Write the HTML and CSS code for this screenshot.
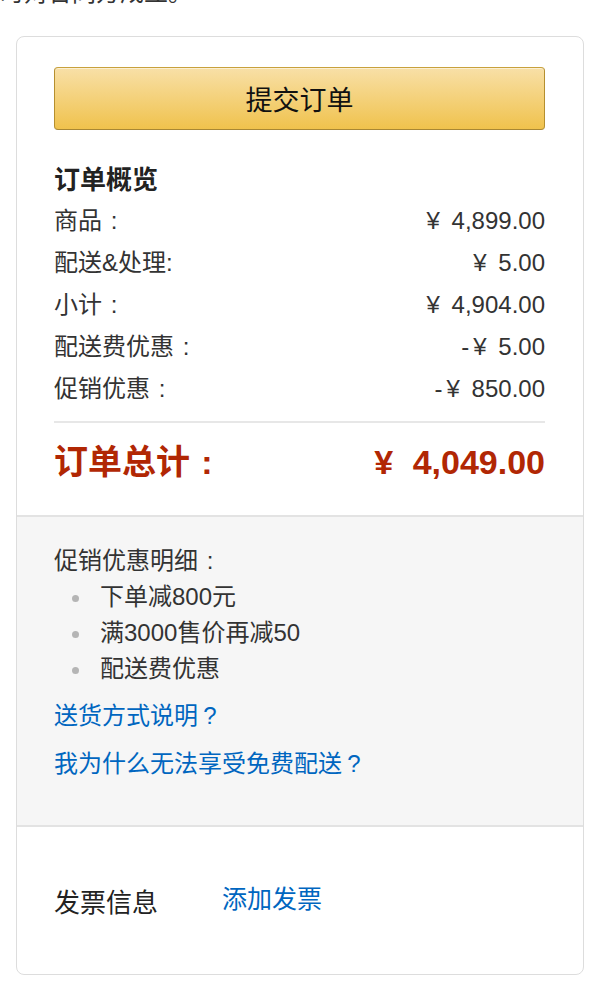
FILE: index.html
```
<!DOCTYPE html>
<html lang="zh-CN">
<head>
    <meta charset="UTF-8">
    <meta name="viewport" content="width=device-width, initial-scale=1.0">
    <title>提交订单</title>
    <link rel="stylesheet" href="styles.css">
</head>
<body>
    <p class="top-note">时对合同方成立。</p>

    <div class="order-box">
        <div class="summary">
            <button class="submit-btn">提交订单</button>

            <h3 class="summary-title">订单概览</h3>
            <div class="row"><span>商品<span class="punc">:</span></span><span><span class="yen">¥</span> 4,899.00</span></div>
            <div class="row"><span>配送&amp;处理:</span><span><span class="yen">¥</span> 5.00</span></div>
            <div class="row"><span>小计<span class="punc">:</span></span><span><span class="yen">¥</span> 4,904.00</span></div>
            <div class="row"><span>配送费优惠<span class="punc">:</span></span><span>-<span class="yen minus">¥</span> 5.00</span></div>
            <div class="row"><span>促销优惠<span class="punc">:</span></span><span>-<span class="yen minus">¥</span> 850.00</span></div>

            <div class="total">
                <span>订单总计<span class="punc">:</span></span>
                <span><span class="yen">¥</span> 4,049.00</span>
            </div>
        </div>

        <div class="promo">
            <div class="promo-title">促销优惠明细<span class="punc">:</span></div>
            <ul class="promo-list">
                <li>下单减800元</li>
                <li>满3000售价再减50</li>
                <li>配送费优惠</li>
            </ul>
            <a class="promo-link" href="#">送货方式说明<span class="punc">?</span></a>
            <a class="promo-link" href="#">我为什么无法享受免费配送<span class="punc">?</span></a>
        </div>

        <div class="invoice">
            <span class="invoice-label">发票信息</span>
            <a class="invoice-link" href="#">添加发票</a>
        </div>
    </div>
</body>
</html>
```

FILE: styles.css
```
:root {
    --text: #222;
    --link: #0066c0;
    --price: #b12704;
    --line: #dddddd;
}
body {
    margin: 0;
    padding: 0 16px;
    font-family: 'Liberation Sans', 'Noto Sans CJK SC', sans-serif;
    color: var(--text);
    background: #fff;
    overflow: hidden;
}
/* fullwidth colon / question mark, centred in a 1em cell */
.punc {
    display: inline-block;
    width: 1em;
    text-align: center;
}
.yen {
    padding: 0 5px 0 1px;
}
.yen.minus {
    padding: 0 5px 0 4px;
}
.top-note {
    margin: -22px 0 0 -16px;
    line-height: 30px;
    font-size: 24px;
    color: #333;
    white-space: nowrap;
}
.order-box {
    margin-top: 28px;
    border: 1px solid var(--line);
    border-radius: 8px;
    overflow: hidden;
}
.summary {
    padding: 30px 38px 30px 37px;
    border-bottom: 2px solid #e3e3e3;
}
.submit-btn {
    display: block;
    width: 100%;
    height: 63px;
    border: 1px solid;
    border-color: #c8a13c #b58f2f #a88734;
    border-radius: 4px;
    background: linear-gradient(to bottom, #f8e0a7, #f0c24d);
    box-shadow: inset 0 1px 0 rgba(255, 255, 255, 0.5);
    font-family: inherit;
    font-size: 27px;
    color: #111;
    cursor: pointer;
}
.summary-title {
    margin: 32px 0 2px;
    font-size: 26px;
    line-height: 36px;
    font-weight: bold;
    color: #222;
}
.row {
    display: flex;
    justify-content: space-between;
    font-size: 24px;
    line-height: 42px;
    color: #333;
}
.total {
    display: flex;
    justify-content: space-between;
    margin-top: 11px;
    padding-top: 16px;
    border-top: 2px solid #e7e7e7;
    font-size: 34px;
    line-height: 46px;
    font-weight: bold;
    color: var(--price);
}
.total .yen {
    padding-right: 10px;
}
.promo {
    background: #f6f6f6;
    padding: 26px 38px 43px 37px;
    border-bottom: 2px solid #e3e3e3;
    font-size: 24px;
    line-height: 36px;
    color: #333;
}
.promo-list {
    margin: 0 0 11px;
    padding-left: 18px;
    list-style: none;
}
.promo-list li::before {
    content: '';
    display: inline-block;
    width: 7px;
    height: 7px;
    margin-right: 21px;
    border-radius: 50%;
    background: #b5b5b5;
    vertical-align: middle;
}
.promo-link {
    display: block;
    color: var(--link);
    text-decoration: none;
}
.promo-link + .promo-link {
    margin-top: 12px;
}
.invoice {
    display: flex;
    align-items: flex-start;
    padding: 54px 37px 49px;
}
.invoice-label {
    width: 168px;
    font-size: 26px;
    line-height: 44px;
    color: #222;
}
.invoice-link {
    font-size: 25px;
    line-height: 36px;
    color: var(--link);
    text-decoration: none;
}
```
